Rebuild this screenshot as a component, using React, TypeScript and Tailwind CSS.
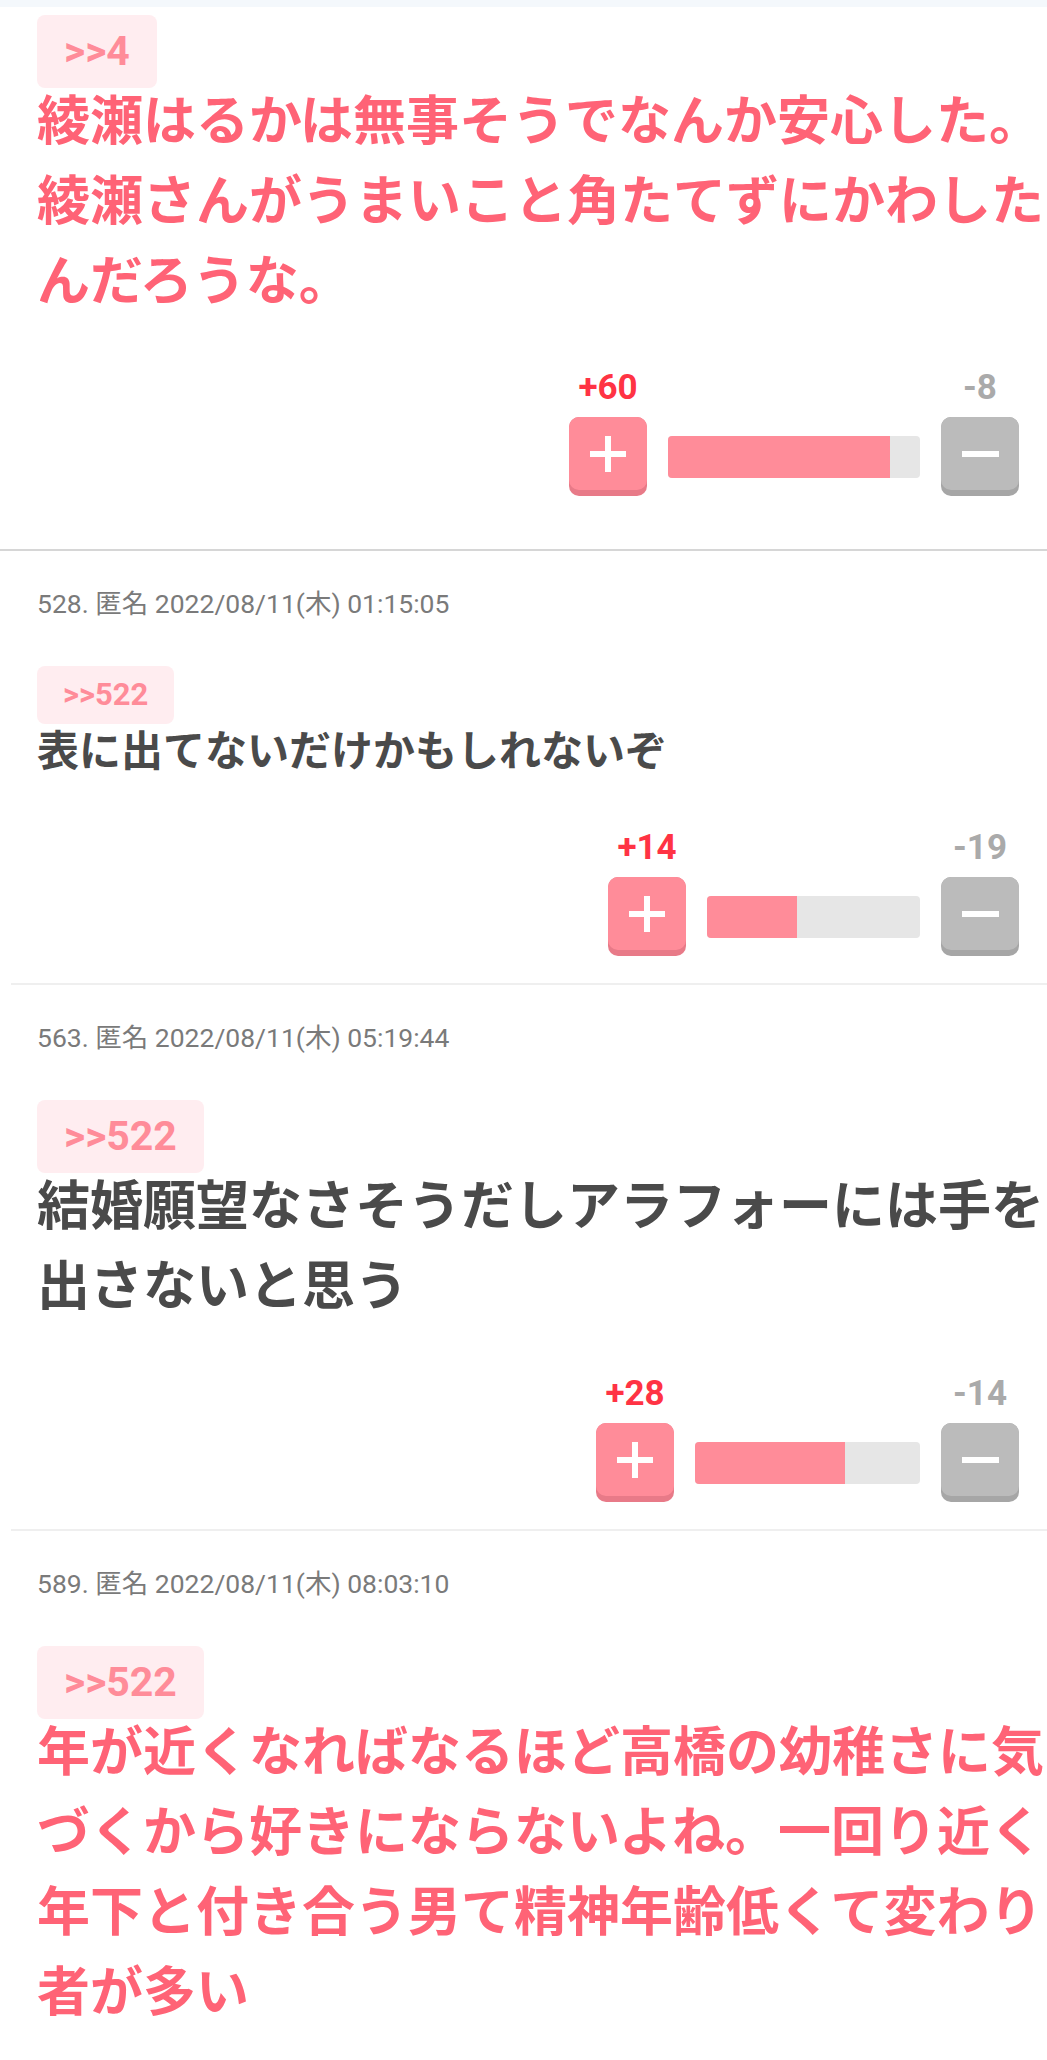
import React from "react";

type Post = {
  meta?: string;
  anchor: string;
  lines: string[];
  big: boolean;
  pink: boolean;
  plus?: number;
  minus?: number;
  barW?: number;
};

const posts: Post[] = [
  {
    anchor: ">>4",
    lines: ["綾瀬はるかは無事そうでなんか安心した。", "綾瀬さんがうまいこと角たてずにかわした", "んだろうな。"],
    big: true,
    pink: true,
    plus: 60,
    minus: 8,
    barW: 252,
  },
  {
    meta: "528. 匿名 2022/08/11(木) 01:15:05",
    anchor: ">>522",
    lines: ["表に出てないだけかもしれないぞ"],
    big: false,
    pink: false,
    plus: 14,
    minus: 19,
    barW: 213,
  },
  {
    meta: "563. 匿名 2022/08/11(木) 05:19:44",
    anchor: ">>522",
    lines: ["結婚願望なさそうだしアラフォーには手を", "出さないと思う"],
    big: true,
    pink: false,
    plus: 28,
    minus: 14,
    barW: 225,
  },
  {
    meta: "589. 匿名 2022/08/11(木) 08:03:10",
    anchor: ">>522",
    lines: [
      "年が近くなればなるほど高橋の幼稚さに気",
      "づくから好きにならないよね。一回り近く",
      "年下と付き合う男て精神年齢低くて変わり",
      "者が多い",
    ],
    big: true,
    pink: true,
  },
];

const Votes = ({ plus, minus, barW }: { plus: number; minus: number; barW: number }) => {
  const ratio = plus / (plus + minus);
  return (
    <div className="flex justify-end mr-[18px]">
      <div className="grid grid-cols-[78px_auto_78px] gap-x-[21px] gap-y-[9px] items-center">
        <div className="text-center text-[35px] leading-[40px] font-bold text-[#ff3344]">+{plus}</div>
        <div />
        <div className="text-center text-[35px] leading-[40px] font-bold text-[#aaaaaa]">-{minus}</div>

        <div className="h-[79px] w-[78px] rounded-[10px] bg-[#e87a88]">
          <div className="h-[73px] w-[78px] rounded-[10px] bg-[#ff8c99] flex items-center justify-center">
            <div className="relative w-[36px] h-[36px]">
              <div className="absolute left-0 top-[15px] w-[36px] h-[6px] bg-white" />
              <div className="absolute left-[15px] top-0 w-[6px] h-[36px] bg-white" />
            </div>
          </div>
        </div>
        <div className="h-[42px] rounded-[4px] bg-[#e6e6e6] overflow-hidden" style={{ width: barW }}>
          <div className="h-full bg-[#ff8c99]" style={{ width: `${ratio * 100}%` }} />
        </div>
        <div className="h-[79px] w-[78px] rounded-[10px] bg-[#a6a6a6]">
          <div className="h-[73px] w-[78px] rounded-[10px] bg-[#bbbbbb] flex items-center justify-center">
            <div className="w-[37px] h-[6px] bg-white" />
          </div>
        </div>
      </div>
    </div>
  );
};

export default function App() {
  return (
    <div className="w-[1047px] min-h-[2060px] bg-white overflow-hidden" style={{ fontFamily: 'Roboto, "Noto Sans CJK JP", sans-serif' }}>
      <div className="h-[7px] bg-[#f4f8fc]" />

      {posts.map((p, i) => (
        <div key={i}>
          {i === 1 && <div className="h-[2px] bg-[#d6d6d6]" />}
          {i > 1 && <div className="h-[2px] ml-[11px] bg-[#efefef]" />}
          <div className={i === 0 ? "pl-[37px] pr-[10px] pt-[8px] pb-[53px]" : "pl-[37px] pr-[10px] pt-[38px] pb-[27px]"}>
            {p.meta && <div className="text-[26.5px] leading-[30px] text-[#7a7a7a]">{p.meta}</div>}
            <div className={p.meta ? "mt-[47px]" : ""}>
              <span
                className={
                  p.big
                    ? "inline-flex items-center h-[73px] px-[27px] rounded-[8px] bg-[#ffedf0] text-[#ff8c99] text-[41px] font-bold"
                    : "inline-flex items-center h-[58px] px-[26px] rounded-[8px] bg-[#ffedf0] text-[#ff8c99] text-[31px] font-bold"
                }
              >
                {p.anchor}
              </span>
            </div>
            <div
              className={
                (p.big ? "text-[53px] leading-[80px] mt-[-6px] " : "text-[42px] leading-[63px] mt-[-4px] ") +
                (p.pink ? "text-[#ff6376] " : "text-[#4a4a4a] ") +
                "font-bold whitespace-nowrap"
              }
            >
              {p.lines.map((l, j) => (
                <div key={j}>{l}</div>
              ))}
            </div>
            {p.plus !== undefined && (
              <div className={i === 0 ? "mt-[46px]" : i === 1 ? "mt-[45px]" : "mt-[47px]"}>
                <Votes plus={p.plus} minus={p.minus ?? 0} barW={p.barW ?? 220} />
              </div>
            )}
          </div>
        </div>
      ))}
    </div>
  );
}
